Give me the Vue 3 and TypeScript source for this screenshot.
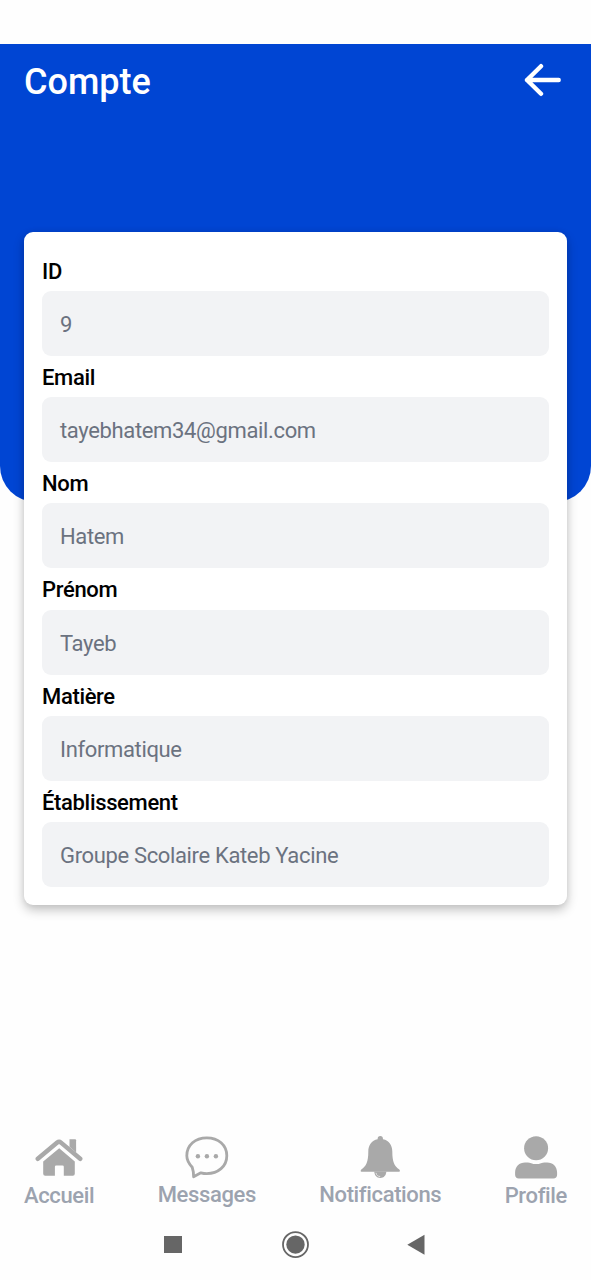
<script setup lang="ts">
interface Field {
  label: string
  value: string
}

const fields: Field[] = [
  { label: 'ID', value: '9' },
  { label: 'Email', value: 'tayebhatem34@gmail.com' },
  { label: 'Nom', value: 'Hatem' },
  { label: 'Prénom', value: 'Tayeb' },
  { label: 'Matière', value: 'Informatique' },
  { label: 'Établissement', value: 'Groupe Scolaire Kateb Yacine' },
]
</script>

<template>
  <div class="screen">
    <header class="hero">
      <h1 class="title">Compte</h1>
      <svg class="back" width="38" height="34" viewBox="0 0 38 34">
        <path d="M34.7 17H3M17 3.2 3 17l14 13.8" />
      </svg>
    </header>

    <main class="card">
      <div v-for="field in fields" :key="field.label" class="field">
        <span class="label">{{ field.label }}</span>
        <div class="value">{{ field.value }}</div>
      </div>
    </main>

    <nav class="tabs">
      <div class="tab">
        <svg width="48" height="44" viewBox="0 0 48 44">
          <path d="M34.5 4.2h5.6q1 0 1 1v12.200l-6.600-5.600z" />
          <path d="M2.8 23.8 22.2 7.6q1.9-1.6 3.8 0l19.2 16.2" class="roof" />
          <path d="M24.2 13.2 39.8 26.5V38.8q0 2-2 2H28.8V31.8q0-1.3-1.3-1.3h-6.3q-1.3 0-1.3 1.3v9H10.2q-2 0-2-2V26.5z" />
        </svg>
        <span class="tab-name">Accueil</span>
      </div>
      <div class="tab raised">
        <svg width="48" height="44" viewBox="0 0 48 44">
          <path
            class="bubble"
            d="M9.2 32.200C5.900 28.600 3.800 24.900 3.800 20.700 3.800 10 12.300 2.800 23.800 2.800s20 7.200 20 17.900S35.100 38.600 23.800 38.600c-2.100 0-4-.3-5.900-.8l-7.300 4c.2-3.300-.4-6.600-1.400-9.600z"
          />
          <circle cx="14.900" cy="21.200" r="2.200" />
          <circle cx="23.900" cy="21.200" r="2.200" />
          <circle cx="32.900" cy="21.200" r="2.200" />
        </svg>
        <span class="tab-name">Messages</span>
      </div>
      <div class="tab raised">
        <svg width="48" height="44" viewBox="0 0 48 44">
          <path d="M24.300 1c1.700 0 2.700 1.200 2.700 3.200 6 1.100 9.300 6.200 9.300 12.300 0 10.500 2.200 15 7 17.900.8.600 1 2.400-.3 2.400H5.600c-1.300 0-1.100-1.800-.3-2.400 4.800-2.900 7-7.400 7-17.900 0-6.100 3.300-11.200 9.300-12.300 0-2 1-3.200 2.700-3.200z" />
          <path d="M18.300 36.500h12c0 3.800-2.500 6.400-6 6.400s-6-2.600-6-6.400z" />
          <path class="clapper" d="M20 37.800c.3 2.200 1.700 3.700 4.200 3.700" />
        </svg>
        <span class="tab-name">Notifications</span>
      </div>
      <div class="tab">
        <svg width="48" height="44" viewBox="0 0 48 44">
          <circle cx="24.100" cy="13.200" r="12" />
          <path d="M3.100 37.500C3.100 31.500 7.200 27.400 13.200 27.400h2.600c2 0 4.500 1.700 8.300 1.700s6.300-1.700 8.300-1.700H35c6 0 10.100 4.100 10.100 10.100v2.300c0 2.400-1.400 3.800-3.800 3.800H6.900c-2.400 0-3.800-1.400-3.800-3.800z" />
        </svg>
        <span class="tab-name">Profile</span>
      </div>
    </nav>

    <footer class="system">
      <svg width="18" height="30" viewBox="0 0 18 30"><path d="M0 6h18v17H0z" /></svg>
      <svg width="28" height="30" viewBox="0 0 28 30">
        <circle class="ring" cx="14.500" cy="14.600" r="12.500" />
        <circle cx="14.500" cy="14.600" r="9.200" />
      </svg>
      <svg width="18" height="30" viewBox="0 0 18 30"><path d="M17.500 4.800v20L.3 14.800z" /></svg>
    </footer>
  </div>
</template>

<style>
body {
  background: #fefefe;
}
</style>

<style scoped>
.screen {
  display: flex;
  flex-direction: column;
  box-sizing: border-box;
  width: 591px;
  height: 1280px;
  padding-top: 44px;
  background: #fefefe;
  font-family: Roboto, "Liberation Sans", sans-serif;
  overflow: hidden;
}

svg {
  display: block;
  flex: none;
}

.hero {
  display: flex;
  justify-content: space-between;
  align-items: flex-start;
  box-sizing: border-box;
  flex: none;
  height: 458px;
  padding: 16px 29px 0 24px;
  border-radius: 0 0 36px 36px;
  background: #0045d3;
}

.title {
  margin: 0;
  color: #fff;
  font-size: 36px;
  font-weight: 500;
  line-height: 44px;
}

.back {
  margin-top: 3px;
  fill: none;
  stroke: #fff;
  stroke-width: 4.4;
  stroke-linecap: round;
  stroke-linejoin: round;
}

.card {
  box-sizing: border-box;
  flex: none;
  height: 673px;
  margin: -270px 24px 0;
  padding: 18px;
  border-radius: 9px;
  background: #fff;
  box-shadow: 0 5px 11px rgba(0, 0, 0, 0.24), 0 0 6px rgba(0, 0, 0, 0.06);
}

.field {
  height: 106.16px;
}

.label {
  display: block;
  height: 41.16px;
  color: #000;
  font-size: 22px;
  font-weight: 500;
  letter-spacing: -0.34px;
  line-height: 44px;
}

.value {
  height: 65px;
  padding-left: 18px;
  border-radius: 9px;
  background: #f2f3f5;
  color: #6b7280;
  font-size: 22px;
  letter-spacing: -0.35px;
  line-height: 68px;
}

.tabs {
  display: flex;
  justify-content: space-between;
  margin-top: 230px;
  padding: 0 24px;
}

.tab {
  display: flex;
  flex-direction: column;
  align-items: center;
  fill: #a9a9a9;
}

.tab-name {
  margin-top: 5px;
  color: #9ca3af;
  font-size: 22px;
  font-weight: 500;
  letter-spacing: -0.36px;
  line-height: 24px;
}

.raised .tab-name {
  margin-top: 4px;
}

.roof {
  fill: none;
  stroke: #a9a9a9;
  stroke-width: 4.5;
  stroke-linecap: round;
}

.bubble {
  fill: none;
  stroke: #a9a9a9;
  stroke-width: 2.8;
  stroke-linejoin: round;
}

.clapper {
  fill: none;
  stroke: #e4e4e4;
  stroke-width: 1;
}

.system {
  display: flex;
  justify-content: space-between;
  margin-top: 22px;
  padding: 0 166px 0 164px;
  fill: #666;
}

.ring {
  fill: none;
  stroke: #666;
  stroke-width: 1.8;
}
</style>
